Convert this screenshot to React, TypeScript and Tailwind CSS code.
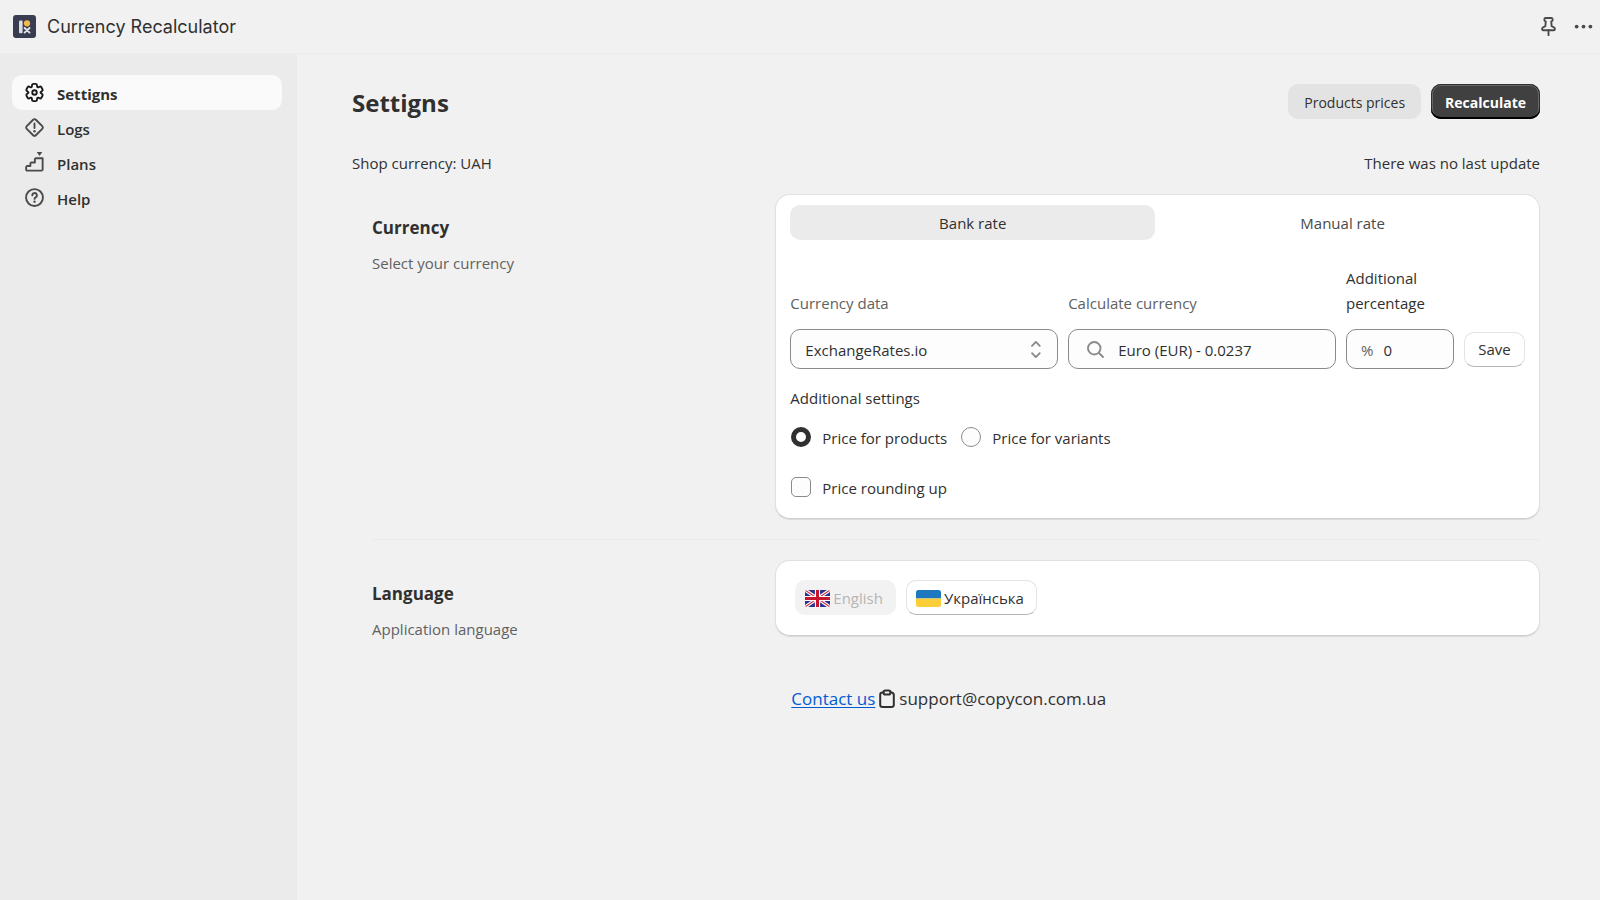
import React, { useState } from "react";

// Six-toothed gear outline around (10, 10), with each corner rounded off.
function buildGearPath() {
  const vertices: [number, number][] = [];
  const add = (degrees: number, radius: number) => {
    const angle = (degrees * Math.PI) / 180;
    vertices.push([10 + radius * Math.sin(angle), 10 - radius * Math.cos(angle)]);
  };
  for (let tooth = 0; tooth < 6; tooth++) {
    add(tooth * 60 - 15, 7.1);
    add(tooth * 60 + 15, 7.1);
    add(tooth * 60 + 30, 4.5);
  }
  const between = (a: [number, number], b: [number, number]) =>
    `${(a[0] + (b[0] - a[0]) * 0.26).toFixed(2)} ${(a[1] + (b[1] - a[1]) * 0.26).toFixed(2)}`;
  const parts = vertices.map((vertex, i) => {
    const previous = vertices[(i + vertices.length - 1) % vertices.length];
    const next = vertices[(i + 1) % vertices.length];
    const start = `${i === 0 ? "M" : "L"}${between(vertex, previous)}`;
    return `${start}Q${vertex[0].toFixed(2)} ${vertex[1].toFixed(2)} ${between(vertex, next)}`;
  });
  return `${parts.join("")}Z`;
}

const gearPath = buildGearPath();

function Icon({ children, className = "size-[25px]" }: { children: React.ReactNode; className?: string }) {
  return (
    <svg
      viewBox="0 0 20 20"
      className={`shrink-0 ${className}`}
      fill="none"
      stroke="currentColor"
      strokeWidth="1.5"
      strokeLinecap="round"
      strokeLinejoin="round"
      aria-hidden="true"
    >
      {children}
    </svg>
  );
}

const SettingsIcon = () => (
  <Icon>
    <path d={gearPath} />
    <circle cx="10" cy="10" r="1.8" />
  </Icon>
);

const LogsIcon = () => (
  <Icon>
    <path d="M8.9 3.8 3.8 8.9a1.55 1.55 0 0 0 0 2.2l5.1 5.1a1.55 1.55 0 0 0 2.2 0l5.1-5.1a1.55 1.55 0 0 0 0-2.2l-5.1-5.1a1.55 1.55 0 0 0-2.2 0Z" />
    <path d="M10 6.8v3.6" />
    <circle cx="10" cy="13" r=".95" fill="currentColor" stroke="none" />
  </Icon>
);

const PlansIcon = () => (
  <Icon>
    <path d="M16.5 6.6v9a.9.9 0 0 1-.9.9H4.2a.9.9 0 0 1-.9-.9v-1.9a.9.9 0 0 1 .9-.9h2.5v-1.9a.9.9 0 0 1 .9-.9h2.7V7.5a.9.9 0 0 1 .9-.9Z" />
    <path d="M11.8 1.6h4.4L14 4.8Z" fill="currentColor" stroke="none" />
  </Icon>
);

const HelpIcon = () => (
  <Icon>
    <circle cx="10" cy="10" r="6.75" />
    <path d="M8.2 8.3a1.85 1.85 0 1 1 2.7 1.65c-.55.3-.9.6-.9 1.15" />
    <circle cx="10" cy="13.3" r=".95" fill="currentColor" stroke="none" />
  </Icon>
);

const navItems = [
  { label: "Settigns", icon: SettingsIcon, active: true },
  { label: "Logs", icon: LogsIcon, active: false },
  { label: "Plans", icon: PlansIcon, active: false },
  { label: "Help", icon: HelpIcon, active: false },
];

function AppLogo() {
  return (
    <svg viewBox="0 0 23 23" className="size-[23px] shrink-0" aria-hidden="true">
      <rect width="23" height="23" rx="3" fill="#393d51" />
      <rect x="6" y="5.6" width="3.6" height="12.6" rx="1" fill="#dcdde2" />
      <circle cx="14" cy="8.3" r="3.1" fill="#f2b94b" />
      <path d="m11.6 13 4.9 4.6M16.5 13l-4.9 4.6" stroke="#e4e5e9" strokeWidth="1.9" strokeLinecap="round" />
    </svg>
  );
}

function UkFlag() {
  return (
    <svg viewBox="0 0 25 17" className="h-[17px] w-[25px] shrink-0" aria-hidden="true">
      <clipPath id="uk-flag">
        <rect width="25" height="17" rx="2.5" />
      </clipPath>
      <g clipPath="url(#uk-flag)">
        <rect width="25" height="17" fill="#2b3089" />
        <path d="m0 0 25 17M25 0 0 17" stroke="#fff" strokeWidth="3.4" />
        <path d="m0 0 25 17M25 0 0 17" stroke="#d0324a" strokeWidth="1.1" />
        <path d="M12.5 0v17M0 8.5h25" stroke="#fff" strokeWidth="5.2" />
        <path d="M12.5 0v17M0 8.5h25" stroke="#c8152d" strokeWidth="3" />
      </g>
    </svg>
  );
}

function UaFlag() {
  return (
    <svg viewBox="0 0 25 17" className="h-[17px] w-[25px] shrink-0" aria-hidden="true">
      <path d="M2.5 0h20A2.5 2.5 0 0 1 25 2.5v6H0v-6A2.5 2.5 0 0 1 2.5 0Z" fill="#1d78bf" />
      <path d="M0 8.5h25v6a2.5 2.5 0 0 1-2.5 2.5h-20A2.5 2.5 0 0 1 0 14.5Z" fill="#fbcd38" />
    </svg>
  );
}

function Header() {
  return (
    <header className="flex h-[54px] items-center justify-between border-b border-[#ebebeb] bg-[#f1f1f1] pl-[13px] pr-1">
      <div className="flex items-center gap-[11px]">
        <AppLogo />
        <span className="font-[Inter,sans-serif] text-[18px] leading-6 text-[#303030]">Currency Recalculator</span>
      </div>
      <div className="flex items-center gap-[10px] text-[#4a4a4a]">
        <button type="button" aria-label="Pin">
          <Icon>
            <path d="M7.7 3.2h4.6a1 1 0 0 1 1 1v.6a1 1 0 0 1-.6.9l-.5.2.3 3.9 1.9.9a1.2 1.2 0 0 1 .7 1.1v.3a.9.9 0 0 1-.9.9H5.8a.9.9 0 0 1-.9-.9v-.3a1.2 1.2 0 0 1 .7-1.1l1.9-.9.3-3.9-.5-.2a1 1 0 0 1-.6-.9v-.6a1 1 0 0 1 1-1Z" />
            <path d="M10 13v3.9" />
          </Icon>
        </button>
        <button type="button" aria-label="More actions">
          <Icon>
            <g fill="currentColor" stroke="none">
              <circle cx="4.5" cy="10" r="1.5" />
              <circle cx="10" cy="10" r="1.5" />
              <circle cx="15.5" cy="10" r="1.5" />
            </g>
          </Icon>
        </button>
      </div>
    </header>
  );
}

function Sidebar() {
  return (
    <nav className="w-[297px] shrink-0 bg-[#ebebeb] pl-3 pr-[15px] pt-[21px]">
      <ul>
        {navItems.map(({ label, icon: NavIcon, active }) => (
          <li key={label}>
            <a
              href="#"
              aria-current={active ? "page" : undefined}
              className={
                active
                  ? "flex h-[35px] items-center gap-[10px] rounded-[10px] bg-[#fafafa] pl-[10px] font-bold text-[#303030]"
                  : "flex h-[35px] items-center gap-[10px] rounded-[10px] pl-[10px] font-semibold text-[#303030]"
              }
            >
              <span className={active ? "text-[#1a1a1a]" : "text-[#4a4a4a]"}>
                <NavIcon />
              </span>
              <span className="pt-1">{label}</span>
            </a>
          </li>
        ))}
      </ul>
    </nav>
  );
}

function Section({ title, description, children }: { title: string; description: string; children: React.ReactNode }) {
  return (
    <section className="ml-5 grid grid-cols-[minmax(0,1fr)_minmax(0,2fr)] items-start gap-[21px]">
      <div className="pt-[21px]">
        <h2 className="text-[17px] font-bold leading-[25px] text-[#303030]">{title}</h2>
        <p className="mt-[11px] text-[#616161]">{description}</p>
      </div>
      {children}
    </section>
  );
}

const cardClass = "rounded-[15px] border border-[#e0e0e0] border-b-[#cfcfcf] bg-white shadow-[0_1px_1px_rgba(0,0,0,0.1)]";
const fieldClass = "h-10 w-full rounded-[10px] border border-[#8a8a8a] bg-[#fdfdfd]";
const plainButtonClass = "h-[35px] rounded-[10px] border border-[#e3e3e3] border-b-[#b5b5b5] bg-white";
const radioClass =
  "size-5 appearance-none rounded-full border border-[#8a8a8a] bg-[#fdfdfd] checked:border-[5px] checked:border-[#303030] checked:bg-white";

function CurrencyCard() {
  const [tab, setTab] = useState("bank");
  const [target, setTarget] = useState("product");
  const tabClass = (on: boolean) =>
    on
      ? "h-[35px] rounded-[10px] bg-[#ebebeb] pt-[2px] text-center font-medium text-[#303030]"
      : "h-[35px] rounded-[10px] pt-[2px] text-center font-medium text-[#4a4a4a]";

  return (
    <div className={`${cardClass} px-[14px] pb-[17px] pt-[10px]`}>
      <div className="grid grid-cols-2 gap-[5px]" role="tablist">
        <button type="button" role="tab" aria-selected={tab === "bank"} onClick={() => setTab("bank")} className={tabClass(tab === "bank")}>
          Bank rate
        </button>
        <button type="button" role="tab" aria-selected={tab === "manual"} onClick={() => setTab("manual")} className={tabClass(tab === "manual")}>
          Manual rate
        </button>
      </div>

      <div className="mt-[26px] flex items-end gap-[10px]">
        <div className="min-w-0 flex-1">
          <label htmlFor="source" className="text-[#616161]">
            Currency data
          </label>
          <div className="relative mt-[13px]">
            <select id="source" className={`${fieldClass} appearance-none pl-[14px] pr-10 pt-[2px]`}>
              <option>ExchangeRates.io</option>
            </select>
            <span className="pointer-events-none absolute inset-y-0 right-[9px] flex items-center text-[#8a8a8a]">
              <Icon>
                <path d="m6.4 7.1 3.1-3.2 3.1 3.2M6.4 12.9l3.1 3.2 3.1-3.2" />
              </Icon>
            </span>
          </div>
        </div>

        <div className="min-w-0 flex-1">
          <label htmlFor="currency" className="text-[#616161]">
            Calculate currency
          </label>
          <div className={`${fieldClass} mt-[13px] flex items-center gap-[10px] pl-[14px] pr-3`}>
            <span className="text-[#8a8a8a]">
              <Icon>
                <circle cx="9" cy="9" r="5" />
                <path d="m13 13 3 3" />
              </Icon>
            </span>
            <input id="currency" type="text" defaultValue="Euro (EUR) - 0.0237" className="min-w-0 flex-1 bg-transparent pt-[2px] outline-none" />
          </div>
        </div>

        <div className="w-[108px]">
          <label htmlFor="percent" className="block">
            Additional percentage
          </label>
          <div className={`${fieldClass} mt-[13px] flex items-center gap-[10px] px-[14px]`}>
            <span className="pt-[2px] text-[#616161]">%</span>
            <input id="percent" type="text" defaultValue="0" className="min-w-0 flex-1 bg-transparent pt-[2px] outline-none" />
          </div>
        </div>

        <button type="button" className={`${plainButtonClass} mb-[2px] w-[61px]`}>
          Save
        </button>
      </div>

      <fieldset className="mt-[17px]">
        <legend>Additional settings</legend>
        <div className="mt-3 flex gap-[14px]">
          <label className="flex items-center gap-[11px]">
            <input
              type="radio"
              name="target"
              checked={target === "product"}
              onChange={() => setTarget("product")}
              className={`${radioClass} ml-px`}
            />
            <span className="pt-[3px]">Price for products</span>
          </label>
          <label className="flex items-center gap-[11px]">
            <input
              type="radio"
              name="target"
              checked={target === "variant"}
              onChange={() => setTarget("variant")}
              className={radioClass}
            />
            <span className="pt-[3px]">Price for variants</span>
          </label>
        </div>
        <label className="mt-[22px] flex w-fit items-center gap-[11px]">
          <input
            type="checkbox"
            className="ml-px size-5 appearance-none rounded-[5px] border border-[#8a8a8a] bg-[#fdfdfd] checked:bg-[#303030]"
          />
          <span className="pt-[3px]">Price rounding up</span>
        </label>
      </fieldset>
    </div>
  );
}

function LanguageCard() {
  return (
    <div className={`${cardClass} flex gap-[10px] px-[19px] pb-5 pt-[19px]`}>
      <button type="button" disabled className="flex h-[35px] items-center gap-[3px] rounded-[10px] bg-[#f2f2f2] pl-[10px] pr-[13px] pt-[2px] font-medium text-[#b5b5b5]">
        <UkFlag />
        English
      </button>
      <button type="button" className={`${plainButtonClass} flex items-center gap-[3px] pl-[9px] pr-3 pt-[2px] font-medium`}>
        <UaFlag />
        Українська
      </button>
    </div>
  );
}

export default function App() {
  return (
    <div className="flex min-h-screen flex-col bg-[#f1f1f1] font-['Open_Sans','Noto_Sans',sans-serif] text-[15px] leading-[25px] text-[#303030]">
      <Header />
      <div className="flex flex-1">
        <Sidebar />
        <main className="min-w-0 flex-1 pl-[55px] pr-[60px] pt-[30px]">
          <div className="flex items-center justify-between">
            <h1 className="pt-[2px] text-[24px] font-bold leading-[33px]">Settigns</h1>
            <div className="flex gap-[10px]">
              <button type="button" className="h-[35px] rounded-[10px] bg-[#e3e3e3] px-4 pt-[2px] text-[14px] font-medium">
                Products prices
              </button>
              <button
                type="button"
                className="h-[35px] rounded-[10px] bg-[#404040] px-[14px] pt-[2px] text-[14px] font-bold text-white shadow-[inset_0_-2px_0_#000,inset_0_0_0_1px_#303030,inset_0_0_0_2px_#666]"
              >
                Recalculate
              </button>
            </div>
          </div>
          <div className="mt-8 flex justify-between">
            <p>Shop currency: UAH</p>
            <p>There was no last update</p>
          </div>
          <div className="mt-[18px]">
            <Section title="Currency" description="Select your currency">
              <CurrencyCard />
            </Section>
            <hr className="mb-5 ml-5 mt-5 border-[#ebebeb]" />
            <Section title="Language" description="Application language">
              <LanguageCard />
            </Section>
          </div>
          <div className="ml-5 mt-11 grid grid-cols-[minmax(0,1fr)_minmax(0,2fr)] gap-[21px] text-[17px]">
            <div className="col-start-2 flex items-center pl-4">
              <a href="#" className="text-[#005bd3] underline underline-offset-2">
                Contact us
              </a>
              <button type="button" aria-label="Copy address" className="mx-[2px]">
                <Icon className="size-5">
                  <g strokeWidth="2">
                    <path d="M6.5 3.5h-1a2.3 2.3 0 0 0-2.3 2.3v9.9A2.3 2.3 0 0 0 5.5 18h9a2.3 2.3 0 0 0 2.3-2.3V5.8a2.3 2.3 0 0 0-2.3-2.3h-1" />
                    <rect x="6.5" y="1.5" width="7" height="4" rx="1.8" />
                  </g>
                </Icon>
              </button>
              <span>support@copycon.com.ua</span>
            </div>
          </div>
        </main>
      </div>
    </div>
  );
}
